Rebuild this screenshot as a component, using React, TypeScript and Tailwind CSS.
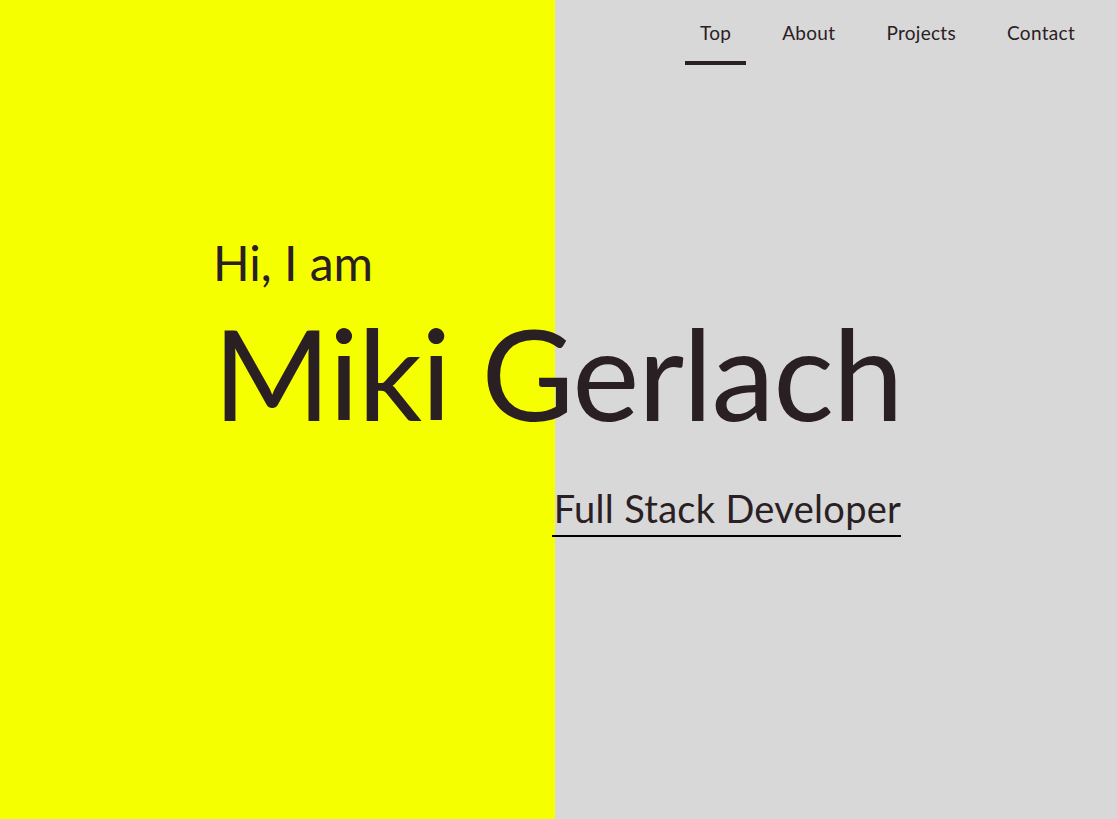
export default function App() {
  const links = ["Top", "About", "Projects", "Contact"];

  return (
    <div className="min-h-[819px] w-full bg-[linear-gradient(to_right,#f6ff00_555px,#d8d8d8_555px)] text-[#2a2024] font-['Lato',sans-serif]">
      <nav className="flex justify-end pr-[27px] pt-[20px]">
        <ul className="flex gap-[21px]">
          {links.map((l, i) => (
            <li key={l}>
              <a href="#" className="flex flex-col items-center text-[19px] leading-[26px] tracking-[0.3px]">
                <span className="px-[15px]">{l}</span>
                <span
                  className={
                    i === 0
                      ? "mt-[15px] h-[4px] w-full bg-[#2a2024]"
                      : "mt-[15px] h-[4px] w-full bg-transparent"
                  }
                />
              </a>
            </li>
          ))}
        </ul>
      </nav>

      <section className="ml-[213px] mt-[170px] inline-flex flex-col">
        <p className="text-[48px] leading-[56px]">Hi, I am</p>
        <h1 className="mt-[18px] text-[127px] leading-[127px] font-normal tracking-[-1.3px]">
          Miki Gerlach
        </h1>
        <p className="mt-[49px] self-end border-b-2 border-black text-[38px] leading-[46px] pb-[4px] pl-[2px] tracking-[0.3px] mr-[1px]">
          Full Stack Developer
        </p>
      </section>
    </div>
  );
}
